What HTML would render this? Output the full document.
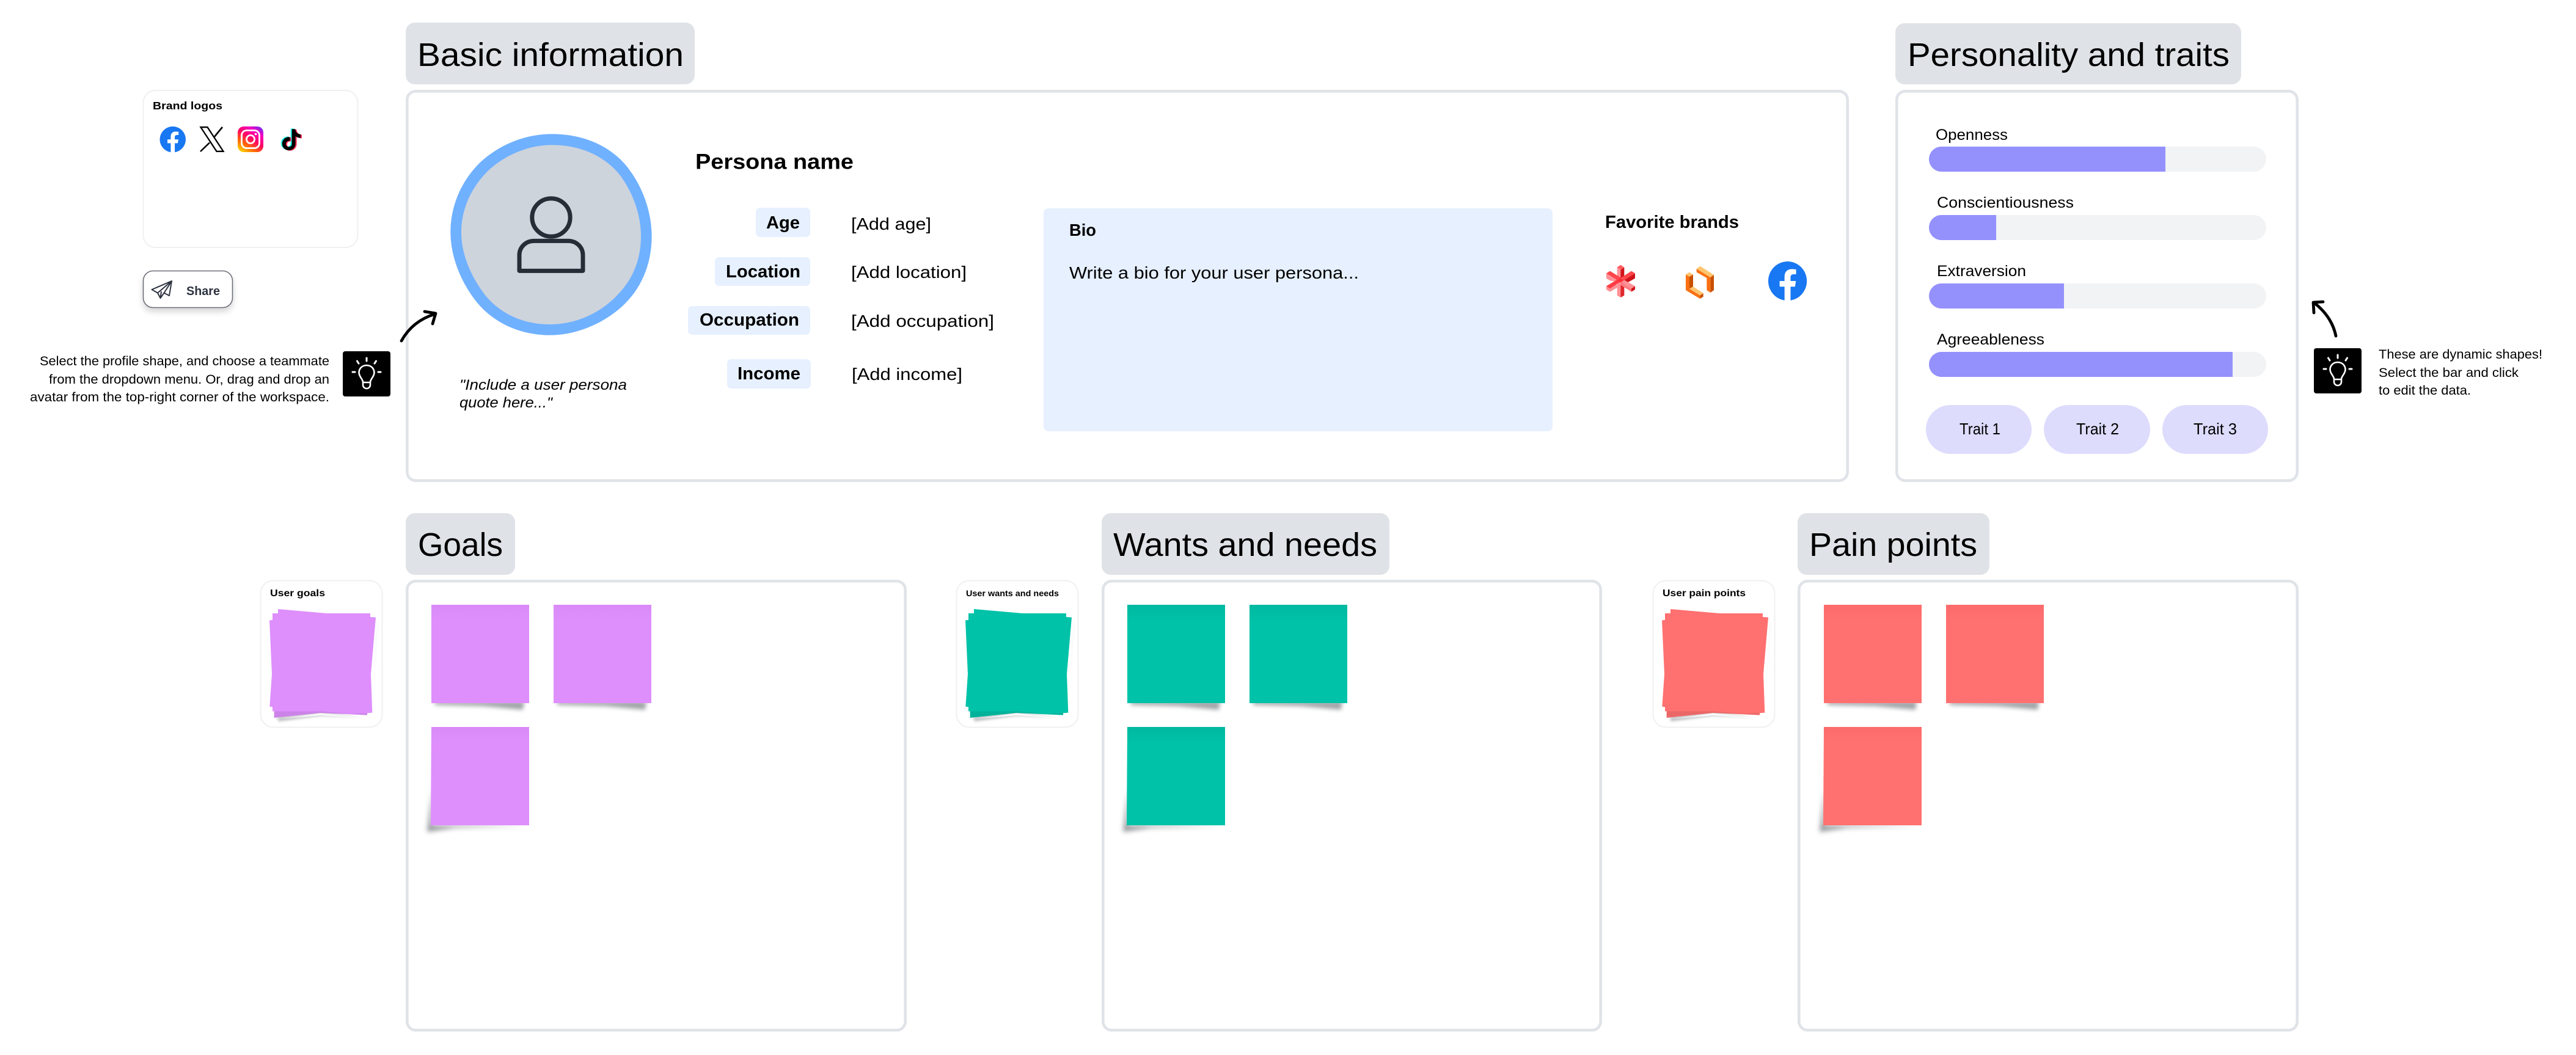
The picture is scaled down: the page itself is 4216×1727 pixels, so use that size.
<!DOCTYPE html>
<html lang="en"><head><meta charset="utf-8"><title>User persona</title>
<style>
html,body{margin:0;padding:0;background:#fff;width:4216px;height:1727px;overflow:hidden}
svg{display:block}
text{font-family:"Liberation Sans",sans-serif;fill:#000}
.h{font-size:54px}
.b{font-weight:700}
</style></head><body>
<svg xmlns="http://www.w3.org/2000/svg" width="4216" height="1727" viewBox="0 0 4216 1727">
<defs>
<filter id="bl" x="-30%" y="-150%" width="160%" height="400%"><feGaussianBlur stdDeviation="3.5"/></filter>
<filter id="bl2" x="-30%" y="-30%" width="160%" height="160%"><feGaussianBlur stdDeviation="4"/></filter>
<filter id="bl3" x="-20%" y="-200%" width="140%" height="500%"><feGaussianBlur stdDeviation="7"/></filter>
<filter id="bs" x="-20%" y="-50%" width="140%" height="200%"><feDropShadow dx="0" dy="6" stdDeviation="5" flood-color="#000" flood-opacity=".16"/></filter>
<linearGradient id="ig" x1="0.15" y1="1" x2="0.85" y2="0"><stop offset="0" stop-color="#ffd600"/><stop offset=".25" stop-color="#ff6f00"/><stop offset=".55" stop-color="#ff0069"/><stop offset=".8" stop-color="#f400c0"/><stop offset="1" stop-color="#7a2cf0"/></linearGradient>
<linearGradient id="topP" x1="0" y1="0" x2="0" y2="1"><stop offset="0" stop-color="#d98af7"/><stop offset=".15" stop-color="#de8ffc"/></linearGradient>
<linearGradient id="topT" x1="0" y1="0" x2="0" y2="1"><stop offset="0" stop-color="#00b9a0"/><stop offset=".18" stop-color="#00c2a8"/></linearGradient>
<linearGradient id="topR" x1="0" y1="0" x2="0" y2="1"><stop offset="0" stop-color="#fb6b6b"/><stop offset=".15" stop-color="#ff7070"/></linearGradient>
<path id="tt" d="M12.525.02c1.31-.02 2.61-.01 3.91-.02.08 1.53.63 3.09 1.75 4.17 1.12 1.11 2.7 1.62 4.24 1.79v4.03c-1.44-.05-2.89-.35-4.2-.97-.57-.26-1.1-.59-1.62-.93-.01 2.92.01 5.84-.02 8.75-.08 1.4-.54 2.79-1.35 3.94-1.31 1.92-3.58 3.17-5.91 3.21-1.43.08-2.86-.31-4.08-1.03-2.02-1.19-3.44-3.37-3.65-5.71-.02-.5-.03-1-.01-1.49.18-1.9 1.12-3.72 2.58-4.96 1.66-1.44 3.98-2.13 6.15-1.72.02 1.48-.04 2.96-.04 4.44-.99-.32-2.15-.23-3.02.37-.63.41-1.11 1.04-1.36 1.75-.21.51-.15 1.07-.14 1.61.24 1.64 1.82 3.02 3.5 2.87 1.12-.01 2.19-.66 2.77-1.61.19-.33.4-.67.41-1.06.1-1.79.06-3.57.07-5.36.01-4.03-.01-8.05.02-12.07z"/>
<g id="fb"><circle cx="12" cy="12" r="12" fill="#1877f2"/><path fill="#fff" d="M16.67 15.47l.53-3.47h-3.33V9.75c0-.95.46-1.87 1.96-1.87h1.51V4.93s-1.37-.23-2.69-.23c-2.74 0-4.53 1.66-4.53 4.67V12H7.08v3.47h3.05V24h3.75v-8.53z"/></g>
<g id="bulb" fill="none" stroke="#fff" stroke-linecap="round">
<path stroke-width="2.6" d="M0 -13C-7.5 -13 -12.5 -7.5 -12.5 -1C-12.5 5 -7 9 -6 14V19A6 6 0 0 0 6 19V14C7 9 12.5 5 12.5 -1C12.5 -7.5 7.5 -13 0 -13Z"/>
<path stroke-width="2.6" d="M-6 15H6"/>
<path stroke-width="3" d="M0 -25V-20M-15.5 -20L-13 -16M15.5 -20L13 -16M-23 -2H-19M19 -2H23"/>
</g>
<g id="stackShape">
<polygon points="110,655 125,560 132,655" fill="#fff"/>
<polygon points="158,732 370,712 578,732 370,724 165,752" fill="#7d8388" opacity=".55" filter="url(#bl3)"/>
<polygon points="158,742 370,714 575,735 370,722" fill="#fff"/>
<polygon points="642,242 660,270 635,560" fill="#fbfbfb"/>
</g>
<g id="stackPoly"><polygon points="162,201 400,222 615,222 615,240 642,242 618,520 625,710 600,712 600,722 370,711 143,735 143,703 135,703 135,682 121,680 132,520 120,256 135,255 135,222 162,222"/></g>
<g id="stackBand"><polygon points="143,703 380,703 600,722 600,712 462,716 370,711 143,735" fill="#000" opacity=".08"/></g>
</defs>
<rect width="4216" height="1727" fill="#fff"/>

<!-- Header tags -->
<rect x="664" y="37" width="473" height="101" rx="15" fill="#dfe2e7"/>
<text class="h" x="683" y="108" textLength="436" lengthAdjust="spacingAndGlyphs">Basic information</text>
<rect x="3102" y="38" width="566" height="100" rx="15" fill="#dfe2e7"/>
<text class="h" x="3122" y="108" textLength="527" lengthAdjust="spacingAndGlyphs">Personality and traits</text>
<rect x="664" y="840" width="179" height="101" rx="15" fill="#dfe2e7"/>
<text class="h" x="684" y="910" textLength="139" lengthAdjust="spacingAndGlyphs">Goals</text>
<rect x="1803" y="840" width="471" height="101" rx="15" fill="#dfe2e7"/>
<text class="h" x="1822" y="910" textLength="432" lengthAdjust="spacingAndGlyphs">Wants and needs</text>
<rect x="2942" y="840" width="314" height="101" rx="15" fill="#dfe2e7"/>
<text class="h" x="2961" y="910" textLength="275" lengthAdjust="spacingAndGlyphs">Pain points</text>

<!-- Main cards -->
<g fill="#fff" stroke="#e0e3e8" stroke-width="4.6">
<rect x="666.3" y="149.3" width="2357.4" height="637.4" rx="14"/>
<rect x="3104.3" y="149.3" width="655.4" height="637.4" rx="14"/>
<rect x="666.3" y="951.3" width="815.4" height="735" rx="14"/>
<rect x="1805.3" y="951.3" width="814.4" height="735" rx="14"/>
<rect x="2944.3" y="951.3" width="815.4" height="735" rx="14"/>
</g>

<!-- Brand card -->
<rect x="234.5" y="148" width="351" height="257" rx="20" fill="#fff" stroke="#f0f0f1" stroke-width="2"/>
<text class="b" x="250" y="179" font-size="17.5" textLength="114" lengthAdjust="spacingAndGlyphs">Brand logos</text>
<use href="#fb" transform="translate(261.5,207) scale(1.77)"/>
<g fill="none" stroke="#000">
<path stroke-width="2.3" d="M328.5 208.200H339.500L365.500 247.800H354.500Z"/>
<path stroke-width="2.6" d="M364 208L350 225M343 233.500L328 248"/>
</g>
<rect x="389" y="207" width="42" height="42" rx="10" fill="url(#ig)"/>
<rect x="395.5" y="213.5" width="29" height="29" rx="8" fill="none" stroke="#fff" stroke-width="2.8"/>
<circle cx="410" cy="228" r="6.6" fill="none" stroke="#fff" stroke-width="2.8"/>
<circle cx="418.5" cy="219.5" r="1.8" fill="#fff"/>
<use href="#tt" fill="#25f4ee" transform="translate(457.500,210.5) scale(1.45)"/>
<use href="#tt" fill="#fe2c55" transform="translate(461.500,212) scale(1.45)"/>
<use href="#tt" fill="#000" transform="translate(459.500,211.3) scale(1.45)"/>

<!-- Share -->
<rect x="234.5" y="443.5" width="146" height="60" rx="16" fill="#fff" stroke="#6d6f7a" stroke-width="1.6" filter="url(#bs)"/>
<g fill="none" stroke="#2d3340" stroke-width="2" stroke-linejoin="round">
<path d="M281 460L248.5 474L258 479.5L262.5 488L268.5 479.5L277 484Z"/>
<path d="M281 460L258 479.5M281 460L268.5 479.5M262.5 488L264 477"/>
</g>
<text class="b" x="305" y="483" font-size="20" textLength="55" lengthAdjust="spacingAndGlyphs" style="fill:#2d3340">Share</text>

<!-- Left hint -->
<g font-size="21" text-anchor="end">
<text x="539" y="598" textLength="474" lengthAdjust="spacingAndGlyphs">Select the profile shape, and choose a teammate</text>
<text x="539" y="628" textLength="459" lengthAdjust="spacingAndGlyphs">from the dropdown menu. Or, drag and drop an</text>
<text x="539" y="657" textLength="490" lengthAdjust="spacingAndGlyphs">avatar from the top-right corner of the workspace.</text>
</g>
<rect x="561" y="575" width="78" height="74" rx="4" fill="#000"/>
<use href="#bulb" transform="translate(600,611)"/>

<path d="M657 558C668 538 686 522 712 514" fill="none" stroke="#000" stroke-width="4.8" stroke-linecap="round"/>
<path d="M695 510L713 513L708 530" fill="none" stroke="#000" stroke-width="4.8" stroke-linecap="round" stroke-linejoin="round"/>

<!-- Avatar -->
<g transform="translate(730,210) scale(.33333)">
<path fill="#70b1ff" d="M520 28C680 28 810 90 890 190C965 285 1010 410 1010 530C1010 650 970 770 880 860C790 950 650 1016 510 1016C370 1016 230 960 140 840C65 740 22 620 22 510C22 380 75 260 165 170C260 80 390 28 520 28Z"/>
<path fill="#ced4dc" d="M520 82C660 82 775 135 850 225C915 310 957 420 957 530C957 640 920 740 840 820C760 905 640 963 510 963C385 963 265 915 185 810C115 715 75 610 75 510C75 395 125 290 205 210C290 130 405 82 520 82Z"/>
<g fill="none" stroke="#272d37" stroke-width="21" stroke-linejoin="round">
<circle cx="516" cy="438" r="93.500"/>
<path d="M360 700V623C360 583 392 553 432 553H600C640 553 672 583 672 623V700Z"/>
</g>
</g>
<g font-size="24" font-style="italic">
<text x="752" y="638" textLength="274" lengthAdjust="spacingAndGlyphs">"Include a user persona</text>
<text x="752" y="667" textLength="152" lengthAdjust="spacingAndGlyphs">quote here..."</text>
</g>

<!-- Persona details -->
<text class="b" x="1138" y="276.500" font-size="35" textLength="259" lengthAdjust="spacingAndGlyphs">Persona name</text>
<g fill="#e6f0ff">
<rect x="1237" y="340" width="89" height="48" rx="7"/>
<rect x="1170" y="421" width="156" height="47" rx="7"/>
<rect x="1126" y="501" width="200" height="47" rx="7"/>
<rect x="1190" y="588" width="137" height="48" rx="7"/>
<rect x="1708" y="341" width="833" height="365" rx="8"/>
</g>
<g font-size="29" font-weight="700">
<text x="1254" y="374" textLength="55" lengthAdjust="spacingAndGlyphs">Age</text>
<text x="1188" y="454" textLength="122" lengthAdjust="spacingAndGlyphs">Location</text>
<text x="1145" y="533" textLength="163" lengthAdjust="spacingAndGlyphs">Occupation</text>
<text x="1207" y="621" textLength="103" lengthAdjust="spacingAndGlyphs">Income</text>
</g>
<g font-size="28">
<text x="1393" y="376" textLength="131" lengthAdjust="spacingAndGlyphs">[Add age]</text>
<text x="1393" y="455" textLength="189" lengthAdjust="spacingAndGlyphs">[Add location]</text>
<text x="1393" y="535" textLength="234" lengthAdjust="spacingAndGlyphs">[Add occupation]</text>
<text x="1394" y="622" textLength="181" lengthAdjust="spacingAndGlyphs">[Add income]</text>
<text x="1750" y="456" textLength="474" lengthAdjust="spacingAndGlyphs">Write a bio for your user persona...</text>
</g>
<text class="b" x="1750" y="386" font-size="28" textLength="44" lengthAdjust="spacingAndGlyphs">Bio</text>
<text class="b" x="2627" y="373" font-size="29" textLength="219" lengthAdjust="spacingAndGlyphs">Favorite brands</text>

<!-- Favorite brand logos -->
<g transform="translate(2620,425) scale(.33333)">
<!-- asterisk -->
<polygon points="80,38 97,26 115,38 97,50" fill="#ff5c60"/>
<polygon points="80,38 97,50 97,92 80,84" fill="#ff9196"/>
<polygon points="97,50 115,38 115,84 97,92" fill="#d0141a"/>
<polygon points="27,67 27,92 45,103 80,108 80,98" fill="#ff9196"/>
<polygon points="27,67 45,56 97,88 80,100" fill="#ff454b"/>
<polygon points="115,100 168,67 168,92 118,120 100,100" fill="#d0141a"/>
<polygon points="100,88 150,56 168,67 115,100" fill="#ff454b"/>
<polygon points="80,112 97,104 97,186 80,176" fill="#ff9196"/>
<polygon points="97,104 115,118 115,176 97,186" fill="#e0272d"/>
<polygon points="27,130 27,147 45,158 80,138 80,122" fill="#ff9196"/>
<polygon points="27,130 80,98 97,108 45,142" fill="#ff3d44"/>
<polygon points="97,108 115,100 168,130 150,142" fill="#ff9196"/>
<polygon points="97,108 150,142 150,158 115,136 97,125" fill="#ff7b80"/>
<polygon points="150,142 168,130 168,147 150,158" fill="#d0141a"/>
<polygon points="80,100 97,88 115,100 97,112" fill="#ff3036"/>
<!-- orange -->
<polygon points="470,45 488,32 555,75 538,87" fill="#ffc56d"/>
<polygon points="470,45 538,87 538,162 520,150 520,90 470,62" fill="#fa7012"/>
<polygon points="538,87 555,75 555,150 538,162" fill="#c94f00"/>
<polygon points="417,73 435,62 453,73 435,84" fill="#ffc56d"/>
<polygon points="435,84 453,73 453,132 435,143" fill="#c94f00"/>
<polygon points="417,73 435,84 435,143 487,176 487,192 417,150" fill="#fa7012"/>
<polygon points="435,143 453,132 503,165 487,176" fill="#ffc56d"/>
<polygon points="487,176 503,165 503,182 487,192" fill="#c94f00"/>
</g>
<use href="#fb" transform="translate(2894,428) scale(2.63,2.67)"/>

<!-- Bars -->
<g fill="#f2f3f5">
<rect x="3157" y="240" width="552" height="41" rx="20.500"/>
<rect x="3157" y="352" width="552" height="41" rx="20.500"/>
<rect x="3157" y="464" width="552" height="41" rx="20.500"/>
<rect x="3157" y="576" width="552" height="41" rx="20.500"/>
</g>
<g fill="#9491fd">
<path d="M3177.500 240H3544V281H3177.500A20.500 20.500 0 0 1 3177.500 240Z"/>
<path d="M3177.500 352H3267V393H3177.500A20.500 20.500 0 0 1 3177.500 352Z"/>
<path d="M3177.500 464H3378V505H3177.500A20.500 20.500 0 0 1 3177.500 464Z"/>
<path d="M3177.500 576H3654V617H3177.500A20.500 20.500 0 0 1 3177.500 576Z"/>
</g>
<g font-size="25">
<text x="3168" y="229" textLength="118" lengthAdjust="spacingAndGlyphs">Openness</text>
<text x="3170" y="340" textLength="224" lengthAdjust="spacingAndGlyphs">Conscientiousness</text>
<text x="3170" y="452" textLength="146" lengthAdjust="spacingAndGlyphs">Extraversion</text>
<text x="3170" y="564" textLength="176" lengthAdjust="spacingAndGlyphs">Agreeableness</text>
</g>
<g fill="#dddcfd">
<rect x="3152" y="663" width="173" height="80" rx="40"/>
<rect x="3345" y="663" width="174" height="80" rx="40"/>
<rect x="3539" y="663" width="173" height="80" rx="40"/>
</g>
<g font-size="26">
<text x="3207" y="711" textLength="67" lengthAdjust="spacingAndGlyphs">Trait 1</text>
<text x="3398" y="711" textLength="70" lengthAdjust="spacingAndGlyphs">Trait 2</text>
<text x="3590" y="711" textLength="71" lengthAdjust="spacingAndGlyphs">Trait 3</text>
</g>

<!-- Right hint -->
<path d="M3823 550C3819 530 3808 512 3788 496" fill="none" stroke="#000" stroke-width="4.8" stroke-linecap="round"/>
<path d="M3787 512L3786 495L3802 494" fill="none" stroke="#000" stroke-width="4.800" stroke-linecap="round" stroke-linejoin="round"/>
<rect x="3787" y="570" width="78" height="74" rx="4" fill="#000"/>
<use href="#bulb" transform="translate(3826,606)"/>
<g font-size="21">
<text x="3893" y="587" textLength="268" lengthAdjust="spacingAndGlyphs">These are dynamic shapes!</text>
<text x="3893" y="617" textLength="229" lengthAdjust="spacingAndGlyphs">Select the bar and click</text>
<text x="3893" y="646" textLength="151" lengthAdjust="spacingAndGlyphs">to edit the data.</text>
</g>

<!-- Goals -->
<rect x="426.500" y="950.500" width="199" height="240" rx="21" fill="#fff" stroke="#f0f0f1" stroke-width="2"/>
<text class="b" x="442" y="976" font-size="15.500" textLength="90" lengthAdjust="spacingAndGlyphs">User goals</text>
<g transform="translate(401,930) scale(.33333)">
<use href="#stackShape"/><use href="#stackPoly" fill="#de8ffc"/><use href="#stackBand"/>
</g>
<!-- Wants -->
<rect x="1565.500" y="950.500" width="199" height="240" rx="21" fill="#fff" stroke="#f0f0f1" stroke-width="2"/>
<text class="b" x="1581" y="976" font-size="14" textLength="152" lengthAdjust="spacingAndGlyphs">User wants and needs</text>
<g transform="translate(1540,930) scale(.33333)">
<use href="#stackShape"/><use href="#stackPoly" fill="#00c2a8"/><use href="#stackBand"/>
</g>
<!-- Pain -->
<rect x="2705.500" y="950.500" width="199" height="240" rx="21" fill="#fff" stroke="#f0f0f1" stroke-width="2"/>
<text class="b" x="2721" y="976" font-size="15.500" textLength="136" lengthAdjust="spacingAndGlyphs">User pain points</text>
<g transform="translate(2680,930) scale(.33333)">
<use href="#stackShape"/><use href="#stackPoly" fill="#ff7070"/><use href="#stackBand"/>
</g>

<!-- Sticky shadows -->
<g fill="#555b60" opacity=".55" filter="url(#bl)">
<polygon points="712,1148 858,1148 856,1162 790,1156 712,1154"/>
<polygon points="912,1148 1058,1148 1056,1162 990,1156 912,1154"/>
<polygon points="1851,1148 1997,1148 1995,1162 1929,1156 1851,1154"/>
<polygon points="2051,1148 2197,1148 2195,1162 2129,1156 2051,1154"/>
<polygon points="2991,1148 3137,1148 3135,1162 3069,1156 2991,1154"/>
<polygon points="3191,1148 3337,1148 3335,1162 3269,1156 3191,1154"/>
</g>
<g fill="#555b60" opacity=".6" filter="url(#bl2)">
<polygon points="707,1290 699,1362 745,1355 860,1352 707,1351"/>
<polygon points="1846,1290 1838,1362 1884,1355 1999,1352 1846,1351"/>
<polygon points="2986,1290 2978,1362 3024,1355 3139,1352 2986,1351"/>
</g>
<!-- Sticky notes -->
<g fill="url(#topP)"><rect x="706" y="990" width="160" height="161"/><rect x="906" y="990" width="160" height="161"/><polygon points="706,1190 866,1190 866,1351 705,1351"/></g>
<g fill="url(#topT)"><rect x="1845" y="990" width="160" height="161"/><rect x="2045" y="990" width="160" height="161"/><polygon points="1845,1190 2005,1190 2005,1351 1844,1351"/></g>
<g fill="url(#topR)"><rect x="2985" y="990" width="160" height="161"/><rect x="3185" y="990" width="160" height="161"/><polygon points="2985,1190 3145,1190 3145,1351 2984,1351"/></g>
</svg>
</body></html>
